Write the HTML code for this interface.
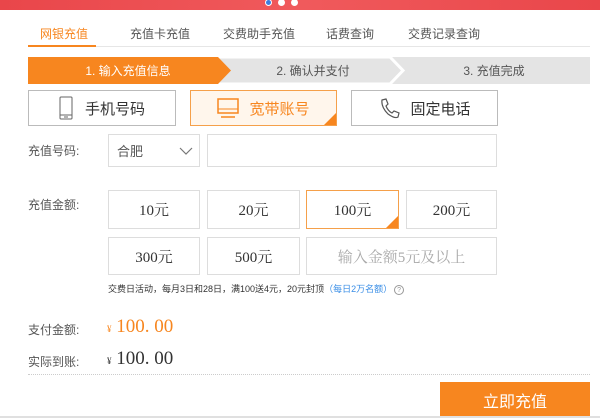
<!DOCTYPE html>
<html><head><meta charset="utf-8"><style>
*{margin:0;padding:0;box-sizing:border-box}
body{width:600px;height:418px;background:#fff;position:relative;overflow:hidden;font-family:"Liberation Sans","Noto Sans CJK SC",sans-serif;color:#333}
.a{position:absolute}
.top{left:0;top:0;width:600px;height:10px;background:linear-gradient(90deg,#e9464a,#f05a5c 50%,#e9464a)}
.dot{top:-1px;width:7px;height:7px;border-radius:50%;background:#fff}
.tab{top:25px;font-size:12px;color:#555}
.box{border:1px solid #ddd;background:#fff;display:flex;align-items:center;justify-content:center;font-family:"Liberation Serif","Noto Serif CJK SC",serif;font-size:15px;color:#333}
.sel{border-color:#f5a04a}
.corner{position:absolute;right:0;bottom:0;width:0;height:0;border-left:12px solid transparent;border-bottom:12px solid #f7861f}
.lbl{font-size:12px;color:#555}
.tb{border:1px solid #bbb;display:flex;align-items:center;justify-content:center;font-size:15px;color:#333;background:#fff}
</style></head><body>
<div class="a top"></div>
<div class="a dot" style="left:265px;background:#3b7de0;border:1px solid #fff"></div>
<div class="a dot" style="left:278px"></div>
<div class="a dot" style="left:291px"></div>

<div class="a tab" style="left:40px;color:#f7861f">网银充值</div>
<div class="a tab" style="left:130px">充值卡充值</div>
<div class="a tab" style="left:223px">交费助手充值</div>
<div class="a tab" style="left:326px">话费查询</div>
<div class="a tab" style="left:408px">交费记录查询</div>
<div class="a" style="left:28px;top:46px;width:562px;height:1px;background:#e6e6e6"></div>
<div class="a" style="left:28px;top:45px;width:68px;height:2px;background:#f7861f"></div>

<svg class="a" style="left:28px;top:57px" width="562" height="27">
<rect x="0" y="0" width="562" height="27" fill="#e4e4e4"/>
<polygon points="180,0 362,0 375,13.5 362,27 180,27 193,13.5" fill="#e4e4e4" stroke="#fff" stroke-width="3"/>
<polygon points="0,0 190,0 203,13.5 190,27 0,27" fill="#f7861f"/>
<text x="100" y="18" text-anchor="middle" font-size="12" fill="#fff" font-family="Liberation Sans,Noto Sans CJK SC,sans-serif">1. 输入充值信息</text>
<text x="285" y="18" text-anchor="middle" font-size="12" fill="#555" font-family="Liberation Sans,Noto Sans CJK SC,sans-serif">2. 确认并支付</text>
<text x="466" y="18" text-anchor="middle" font-size="12" fill="#555" font-family="Liberation Sans,Noto Sans CJK SC,sans-serif">3. 充值完成</text>
</svg>

<div class="a tb" style="left:28px;top:90px;width:148px;height:36px"><svg width="14" height="24" style="margin-right:12px"><rect x="1" y="1" width="12" height="22" rx="1" fill="none" stroke="#666"/><line x1="1" y1="19" x2="13" y2="19" stroke="#666"/><line x1="5" y1="21" x2="9" y2="21" stroke="#666"/></svg>手机号码</div>
<div class="a tb" style="left:190px;top:90px;width:147px;height:36px;border-color:#f5a04a;background:#fff6ec;color:#f7861f"><svg width="22" height="22" style="margin-right:10px"><rect x="1" y="2" width="20" height="14" fill="none" stroke="#f7861f" stroke-width="1.5"/><line x1="1" y1="12" x2="21" y2="12" stroke="#f7861f"/><line x1="4" y1="20" x2="18" y2="20" stroke="#f7861f" stroke-width="1.5"/></svg>宽带账号<div class="corner"></div></div>
<div class="a tb" style="left:351px;top:90px;width:147px;height:36px"><svg width="22" height="22" style="margin-right:10px"><path d="M4 3 L8 2 L10 7 L8 9 Q10 14 14 16 L16 14 L21 16 L20 20 Q17 22 10 17 Q3 10 4 3Z" fill="none" stroke="#555" stroke-width="1.2"/></svg>固定电话</div>

<div class="a lbl" style="left:28px;top:142px">充值号码:</div>
<div class="a box" style="left:108px;top:134px;width:92px;height:33px;justify-content:flex-start;padding-left:8px;font-family:'Liberation Sans','Noto Sans CJK SC',sans-serif;font-size:13px;color:#555">合肥<svg class="a" style="left:70px;top:12px" width="14" height="9"><polyline points="1,1 7,7 13,1" fill="none" stroke="#777" stroke-width="1.2"/></svg></div>
<div class="a box" style="left:207px;top:134px;width:290px;height:33px"></div>

<div class="a lbl" style="left:28px;top:196px">充值金额:</div>
<div class="a box" style="left:108px;top:190px;width:92px;height:39px">10元</div>
<div class="a box" style="left:207px;top:190px;width:93px;height:39px">20元</div>
<div class="a box sel" style="left:306px;top:190px;width:93px;height:39px">100元<div class="corner"></div></div>
<div class="a box" style="left:406px;top:190px;width:91px;height:39px">200元</div>
<div class="a box" style="left:108px;top:237px;width:92px;height:38px">300元</div>
<div class="a box" style="left:207px;top:237px;width:93px;height:38px">500元</div>
<div class="a box" style="left:306px;top:237px;width:191px;height:38px;color:#aaa;font-size:15px">输入金额5元及以上</div>

<div class="a" style="left:108px;top:282px;font-size:9px;color:#333;white-space:nowrap">交费日活动，每月3日和28日，满100送4元，20元封顶<span style="color:#3a8ee6">（每日2万名额）</span><span style="display:inline-block;width:10px;height:10px;border:1px solid #999;border-radius:50%;font-size:7px;text-align:center;line-height:9px;color:#999;margin-left:2px">?</span></div>

<div class="a lbl" style="left:28px;top:321px">支付金额:</div>
<div class="a" style="left:107px;top:316px;font-family:'Liberation Serif',serif;color:#f7861f;font-size:19px;white-space:nowrap"><span style="font-size:9px">¥</span> 100. 00</div>
<div class="a lbl" style="left:28px;top:353px">实际到账:</div>
<div class="a" style="left:107px;top:348px;font-family:'Liberation Serif',serif;color:#333;font-size:19px;white-space:nowrap"><span style="font-size:9px">¥</span> 100. 00</div>
<div class="a" style="left:28px;top:374px;width:562px;border-top:1px dotted #ccc"></div>
<div class="a" style="left:440px;top:382px;width:150px;height:36px;background:#f7861f;color:#fff;font-size:16px;display:flex;align-items:center;justify-content:center">立即充值</div>
<div class="a" style="left:0;top:416px;width:600px;height:2px;background:#e0e0e0"></div>
</body></html>
